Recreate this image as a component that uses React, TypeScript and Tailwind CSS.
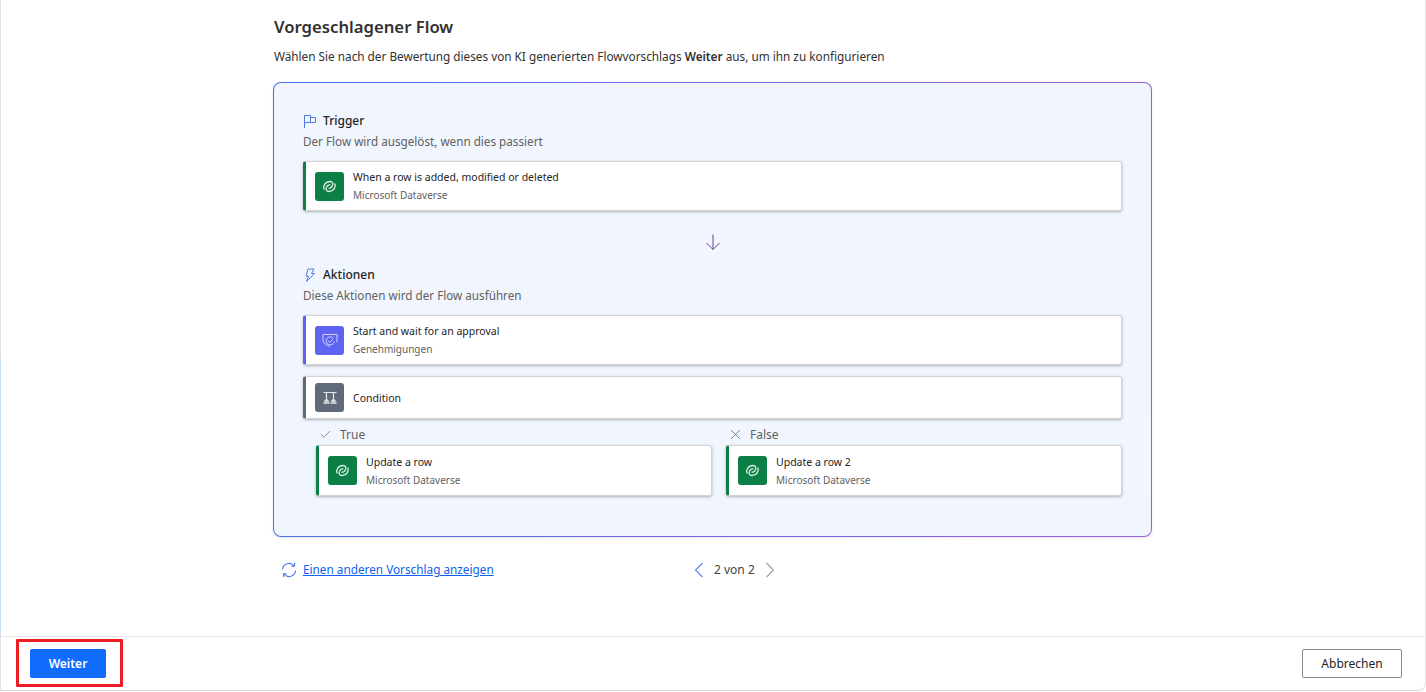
import { Check, X } from "lucide-react";
import type { ReactNode } from "react";

function DataverseIcon() {
  return (
    <svg width="15" height="15" viewBox="0 0 15 15" fill="none" stroke="#e6f4ec" strokeWidth="1.300">
      <path d="M2.200 10.500C.5 7 3.500 2.500 8 2.500c2.500 0 3.500 2 2.500 4" />
      <path d="M12.800 4.500C14.500 8 11.500 12.500 7 12.500c-2.500 0-3.500-2-2.500-4" />
      <path d="M4.500 8.500c.5-2 2.500-3 4-2.500M10.500 6.500c-.5 2-2.500 3-4 2.500" />
    </svg>
  );
}

function ApprovalIcon() {
  return (
    <svg width="16" height="16" viewBox="0 0 16 16" fill="none" stroke="#d5d3fb" strokeWidth="1">
      <path d="M1 2.500h14v5.500c0 .8-.3 1.600-.8 2.300M1 2.500v5.500c0 3 3 5 7 6.500" />
      <path d="M11.300 6.300a4 4 0 1 0 .9 3" />
      <path d="M6.300 9.100l1.400 1.400 2.800-3.200" />
    </svg>
  );
}

function ConditionIcon() {
  return (
    <svg width="16" height="16" viewBox="0 0 16 16" fill="none" stroke="#e5e7eb" strokeWidth="1.200">
      <path d="M1.500 2.500h13M4.500 2.500v6M11.500 2.500v6" />
      <path d="M4.500 8.500L7 11.500H2zM11.500 8.500L14 11.500H9z" fill="#e5e7eb" strokeWidth="0.500" />
      <path d="M1.500 13h6M8.500 13h6" strokeWidth="1.400" />
    </svg>
  );
}

function Chevron({ points, color }: { points: string; color: string }) {
  return (
    <svg width="10" height="16" viewBox="0 0 10 16" fill="none" stroke={color} strokeWidth="1.100">
      <path d={points} />
    </svg>
  );
}

function FlowCard({
  bar,
  tile,
  icon,
  title,
  subtitle,
  className,
}: {
  bar: string;
  tile: string;
  icon: ReactNode;
  title: string;
  subtitle?: string;
  className: string;
}) {
  return (
    <div className={`flex items-center rounded-[3px] border-y border-r border-y-[#d4d4d6] border-r-[#d4d4d6] border-l-[3px] bg-white pl-[9px] shadow-[0_1px_3px_rgba(0,0,0,0.28)] ${bar} ${className}`}>
      <div className={`flex h-[29px] w-[29px] shrink-0 items-center justify-center rounded-[3px] ${tile}`}>{icon}</div>
      <div className="ml-[9px] min-w-0">
        <div className="text-[10.5px] leading-[18px] text-[#242424]">{title}</div>
        {subtitle && <div className="text-[10px] leading-[18px] text-[#616161]">{subtitle}</div>}
      </div>
    </div>
  );
}

export default function App() {
  return (
    <div className="flex h-[692px] w-[1426px] flex-col overflow-hidden font-['Noto_Sans',sans-serif]">
      <div className="flex h-[691px] flex-col rounded-br-lg border-r border-b border-l border-r-[#e5e5e5] border-b-[#d9d9d9] border-l-[#e3e3e3] bg-white">
        <main className="flex-1 pl-[272px]">
          <h1 className="pt-[15px] pl-px text-[16.700px] leading-6 font-semibold text-[#323130]">Vorgeschlagener Flow</h1>
          <p className="mt-[8px] pl-px text-[11.770px] leading-[18px] text-[#323130]">
            Wählen Sie nach der Bewertung dieses von KI generierten Flowvorschlags <b className="font-semibold">Weiter</b> aus, um ihn zu konfigurieren
          </p>

          <div className="mt-[17px] h-[455px] w-[879px] rounded-[8px] bg-[linear-gradient(100deg,#4a72e8,#9b5ed8)] p-px shadow-[0_1px_3px_rgba(0,0,0,0.1)]">
            <div className="flex h-full flex-col rounded-[7px] bg-[#f0f5fe] px-[29px]">
              <div className="mt-[28px] flex h-5 items-center">
                <svg width="14" height="14" viewBox="0 0 14 14" fill="none" stroke="#4f78ea" strokeWidth="1">
                  <path d="M1.500 14V1.500h6v7h-6M7.500 3.500h5v5h-5" />
                </svg>
                <span className="ml-[6px] text-[12px] font-medium text-[#242424]">Trigger</span>
              </div>
              <div className="mt-[1px] text-[11.700px] leading-[18px] text-[#616161]">Der Flow wird ausgelöst, wenn dies passiert</div>
              <FlowCard
                bar="border-l-[#0b7f46]"
                tile="bg-[#0b7f46]"
                icon={<DataverseIcon />}
                title="When a row is added, modified or deleted"
                subtitle="Microsoft Dataverse"
                className="mt-[11px] h-[50px]"
              />

              <div className="mt-[23px] flex justify-center">
                <svg width="16" height="16" viewBox="0 0 16 16" fill="none" stroke="#6b3f90" strokeWidth="1">
                  <path d="M8 .500v15M1.500 9l6.500 6.500L14.500 9" />
                </svg>
              </div>

              <div className="mt-[15px] flex h-5 items-center">
                <svg width="14" height="14" viewBox="0 0 14 14" fill="none" stroke="#4f78ea" strokeWidth="1">
                  <path d="M5 1h6L8.500 5.500H11.500L3.500 13.500 5.500 8H3z" />
                </svg>
                <span className="ml-[6px] text-[12px] font-medium text-[#242424]">Aktionen</span>
              </div>
              <div className="mt-[1px] text-[11.700px] leading-[18px] text-[#616161]">Diese Aktionen wird der Flow ausführen</div>
              <FlowCard
                bar="border-l-[#5f63f2]"
                tile="bg-[#5f63f2]"
                icon={<ApprovalIcon />}
                title="Start and wait for an approval"
                subtitle="Genehmigungen"
                className="mt-[11px] h-[50px]"
              />
              <FlowCard
                bar="border-l-[#5f6b78]"
                tile="bg-[#5f6b78]"
                icon={<ConditionIcon />}
                title="Condition"
                className="mt-[11px] h-[43px]"
              />

              <div className="mt-[5px] grid grid-cols-2 gap-[14px] pl-[13px]">
                <div>
                  <div className="flex h-[21px] items-center pl-[3px] text-[12px] text-[#616161]">
                    <Check size={13} strokeWidth={1.200} className="text-[#505a6b]" />
                    <span className="ml-[8px]">True</span>
                  </div>
                  <FlowCard
                    bar="border-l-[#0b7f46]"
                    tile="bg-[#0b7f46]"
                    icon={<DataverseIcon />}
                    title="Update a row"
                    subtitle="Microsoft Dataverse"
                    className="h-[51px]"
                  />
                </div>
                <div>
                  <div className="flex h-[21px] items-center pl-[1px] text-[12px] text-[#616161]">
                    <X size={17} strokeWidth={1} className="text-[#505a6b]" />
                    <span className="ml-[6px]">False</span>
                  </div>
                  <FlowCard
                    bar="border-l-[#0b7f46]"
                    tile="bg-[#0b7f46]"
                    icon={<DataverseIcon />}
                    title="Update a row 2"
                    subtitle="Microsoft Dataverse"
                    className="h-[51px]"
                  />
                </div>
              </div>
            </div>
          </div>

          <div className="mt-[23px] flex h-5 w-[879px] items-center">
            <svg width="16" height="16" viewBox="0 0 16 16" fill="none" stroke="#4f78ea" strokeWidth="1.100" className="ml-[8px]">
              <path d="M1.500 7.500A6.500 6.500 0 0 1 13 3.800M14.500 8.500A6.500 6.500 0 0 1 3 12.200" />
              <path d="M13.500 1v3.300h-3.300M2.500 15v-3.300h3.300" />
            </svg>
            <a className="ml-[6px] w-[391px] text-[11.770px] text-[#0f5ff0] underline">Einen anderen Vorschlag anzeigen</a>
            <Chevron points="M8.500 1L1.500 8l7 7" color="#5b7ff0" />
            <span className="mx-[10px] text-[12px] text-[#424242]">2 von 2</span>
            <Chevron points="M1.500 1l7 7-7 7" color="#9a9aa2" />
          </div>
        </main>

        <footer className="flex h-[54px] shrink-0 items-center justify-between border-t border-[#e6e8ec] pr-[23px] pl-[29px]">
          <button className="h-[29px] w-[76px] rounded-[2px] bg-[#0f6cfd] text-[12px] font-semibold text-white">Weiter</button>
          <button className="h-[29px] w-[100px] rounded-[2px] border border-[#8a8a8a] bg-white text-[12px] text-[#242424]">Abbrechen</button>
        </footer>
      </div>
      {/* overlays: blue edge of the sidebar behind, red highlight on the button */}
      <div className="pointer-events-none absolute top-[358px] left-0 h-[278px] w-px bg-[#c9dcf3]" />
      <div className="pointer-events-none absolute top-[639px] left-[16px] h-[48px] w-[107px] rounded-[1px] border-[3px] border-[#ee1c25]" />
    </div>
  );
}
